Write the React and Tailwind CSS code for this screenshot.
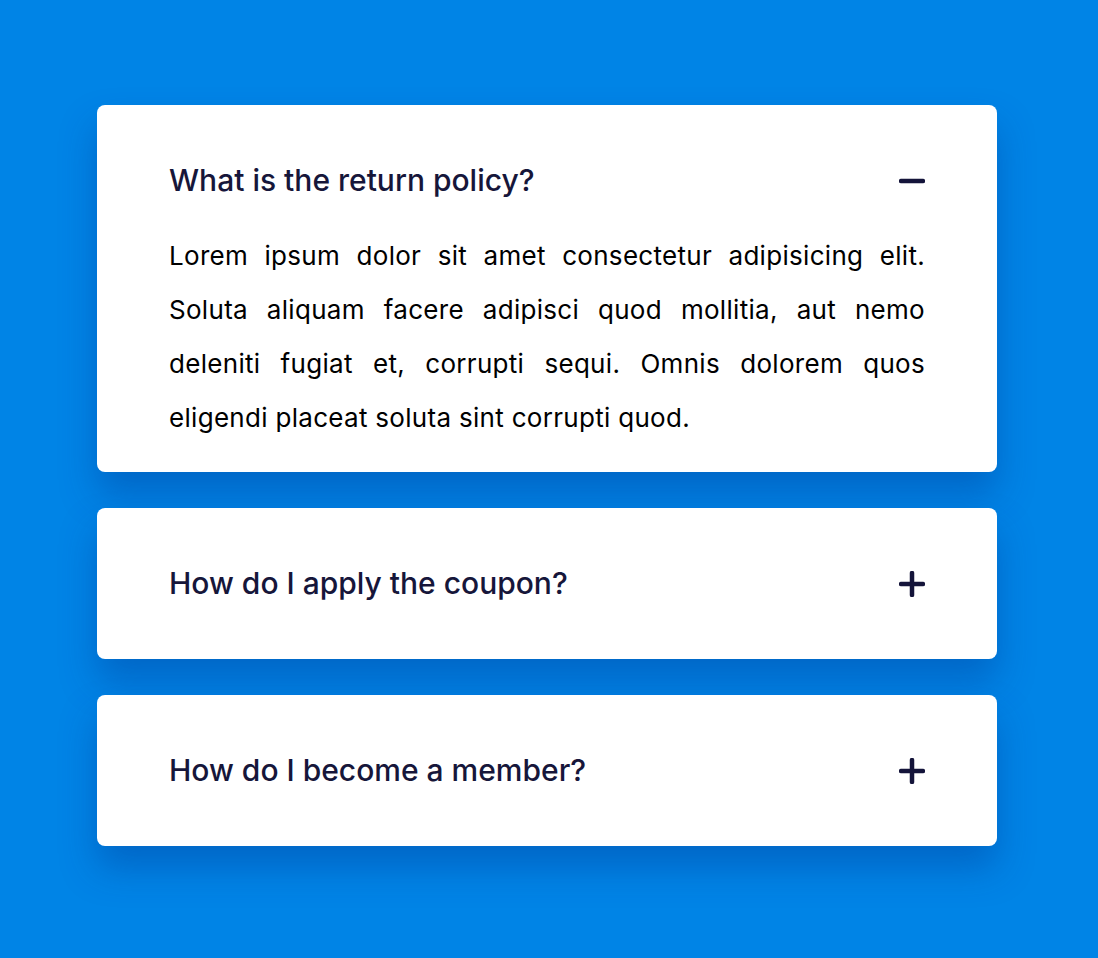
import { useState } from "react";

const faqs = [
  {
    q: "What is the return policy?",
    a: "Lorem ipsum dolor sit amet consectetur adipisicing elit. Soluta aliquam facere adipisci quod mollitia, aut nemo deleniti fugiat et, corrupti sequi. Omnis dolorem quos eligendi placeat soluta sint corrupti quod.",
  },
  {
    q: "How do I apply the coupon?",
    a: "Lorem ipsum dolor sit amet consectetur adipisicing elit. Soluta aliquam facere adipisci quod mollitia, aut nemo deleniti fugiat et.",
  },
  {
    q: "How do I become a member?",
    a: "Lorem ipsum dolor sit amet consectetur adipisicing elit. Omnis dolorem quos eligendi placeat soluta sint corrupti quod.",
  },
];

const Icon = ({ open }) => (
  <svg width="26" height="26" viewBox="0 0 26 26" className="shrink-0">
    <line x1="2" y1="13" x2="24" y2="13" stroke="#14143a" strokeWidth="4.5" strokeLinecap="round" />
    {!open && <line x1="13" y1="2" x2="13" y2="24" stroke="#14143a" strokeWidth="4.5" strokeLinecap="round" />}
  </svg>
);

export default function App() {
  const [open, setOpen] = useState(0);

  return (
    <div className="min-h-screen bg-[#0084e6] pt-[105px] pb-[112px]" style={{ fontFamily: "Inter, 'Open Sans', sans-serif" }}>
      <div className="w-[900px] ml-[97px] flex flex-col gap-[36px]">
        {faqs.map((item, i) => (
          <div
            key={i}
            className="bg-white rounded-lg px-[72px] shadow-[0_22px_36px_rgba(0,50,140,0.35)]"
          >
            <button
              onClick={() => setOpen(open === i ? null : i)}
              className={`w-full flex items-center justify-between pt-[60px] text-left cursor-pointer ${open === i ? "pb-0" : "pb-[60px]"}`}
            >
              <span className="text-[30px] leading-[31px] font-medium text-[#16163a]">{item.q}</span>
              <Icon open={open === i} />
            </button>
            {open === i && (
              <p className="mt-[33px] pb-[27px] text-[26px] leading-[54px] tracking-[0.3px] text-black text-justify">
                {item.a}
              </p>
            )}
          </div>
        ))}
      </div>
    </div>
  );
}
